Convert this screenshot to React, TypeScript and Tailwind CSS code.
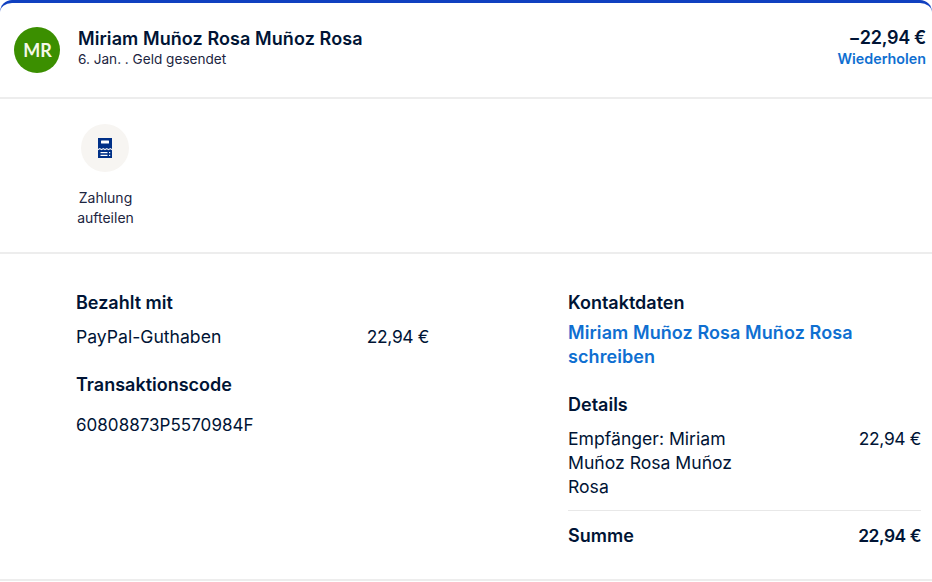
export default function App() {
  return (
    <div className="w-[932px] h-[582px] overflow-hidden bg-white text-[#001435] font-['Inter',sans-serif]">
      <div className="h-[582px] rounded-t-[12px] border-t-[3px] border-[#1040c0]">
        <header className="h-[96px] flex items-center justify-between pl-[14px] pr-[6px] border-b-2 border-[#ededed]">
          <div className="flex items-center gap-[18px]">
            <div className="w-[46px] h-[46px] rounded-full bg-[#3b8f00] text-[#f4f8e8] flex items-center justify-center font-['Lato',sans-serif] font-bold text-[18px] pl-px">MR</div>
            <div className="-mt-[5px]">
              <div className="text-[18px] tracking-[0.08px] leading-[24px] font-semibold">Miriam Muñoz Rosa Muñoz Rosa</div>
              <div className="text-[13.6px] leading-[18px] -mt-px text-[#1c2541]">6. Jan. . Geld gesendet</div>
            </div>
          </div>
          <div className="text-right -mt-[6px]">
            <div className="text-[18px] tracking-[-0.3px] leading-[24px] font-semibold">−22,94 €</div>
            <div className="text-[14.3px] leading-[18px] font-semibold text-[#0f6fd1]">Wiederholen</div>
          </div>
        </header>
        <section className="h-[155px] border-b-2 border-[#ededed] pl-[71px] pt-[25px]">
          <div className="w-[69px] flex flex-col items-center">
            <div className="w-[48px] h-[48px] rounded-full bg-[#f7f5f2] -ml-px flex items-center justify-center">
              <svg width="14" height="20" viewBox="0 0 14 20">
                <path fill="#003087" d="M0 0h14v11l-1.75-1-1.75 1-1.75-1L7 11l-1.75-1L3.5 11l-1.75-1L0 11z" />
                <path fill="#003087" d="M0 12.2l1.75-1 1.75 1 1.75-1 1.75 1 1.75-1 1.75 1 1.75-1 1.75 1V20H0z" />
                <rect x="3" y="2.5" width="8" height="3" rx="0.5" fill="#fff" />
                <rect x="2.5" y="14" width="7" height="1.2" fill="#fff" />
                <rect x="11" y="14" width="1.2" height="1.2" fill="#fff" />
                <rect x="2.5" y="16.8" width="7" height="1.2" fill="#fff" />
                <rect x="11" y="16.8" width="1.2" height="1.2" fill="#fff" />
              </svg>
            </div>
            <div className="mt-[16px] text-center text-[14px] leading-[20px] text-[#1c2541]">Zahlung<br />aufteilen</div>
          </div>
        </section>
        <section className="flex pl-[76px] pr-[11px] pt-[37px] h-[327px] border-b-2 border-[#ededed]">
          <div className="w-[353px]">
            <h3 className="text-[18px] leading-[24px] font-semibold">Bezahlt mit</h3>
            <div className="mt-[10px] flex justify-between items-baseline leading-[24px]">
              <span className="text-[17.6px]">PayPal-Guthaben</span>
              <span className="text-[17.4px] tracking-[-0.35px]">22,94 €</span>
            </div>
            <h3 className="mt-[24px] text-[18px] leading-[24px] font-semibold">Transaktionscode</h3>
            <div className="mt-[16px] text-[17px] tracking-[0.03px] leading-[24px]">60808873P5570984F</div>
          </div>
          <div className="ml-[139px] w-[353px]">
            <h3 className="text-[18px] leading-[24px] font-semibold">Kontaktdaten</h3>
            <div className="mt-[6px] text-[18px] tracking-[0.08px] leading-[24px] font-semibold text-[#0f6fd1] w-[300px]">Miriam Muñoz Rosa Muñoz Rosa schreiben</div>
            <h3 className="mt-[24px] text-[18px] leading-[24px] font-semibold">Details</h3>
            <div className="mt-[10px] flex justify-between leading-[24px]">
              <span className="w-[180px] text-[17.6px]">Empfänger: Miriam Muñoz Rosa Muñoz Rosa</span>
              <span className="text-[17.4px] tracking-[-0.35px]">22,94 €</span>
            </div>
            <div className="mt-[11px] pt-[13px] border-t border-[#e8e8e8] flex justify-between items-baseline leading-[24px] font-semibold">
              <span className="text-[18px]">Summe</span>
              <span className="text-[17.4px] tracking-[-0.45px]">22,94 €</span>
            </div>
          </div>
        </section>
      </div>
    </div>
  );
}
